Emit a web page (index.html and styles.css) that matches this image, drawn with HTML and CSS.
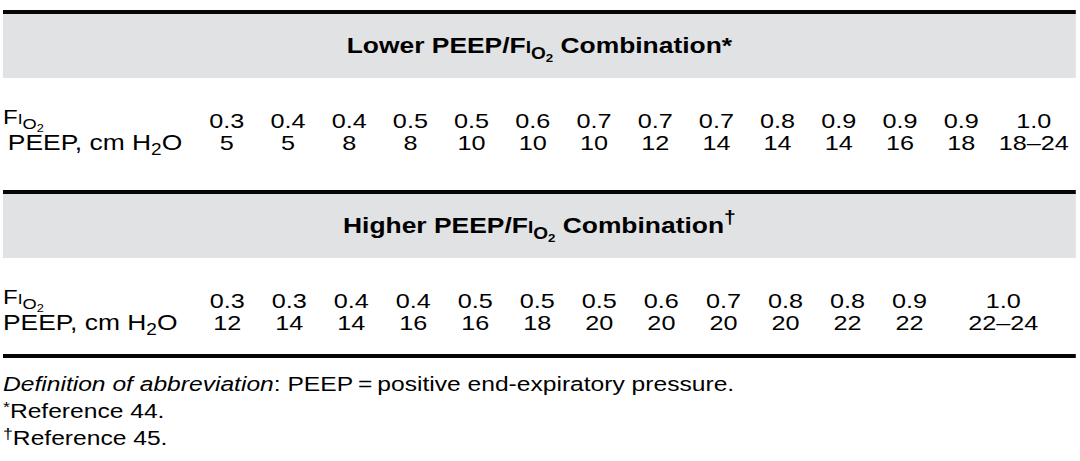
FILE: index.html
```html
<!DOCTYPE html>
<html lang="en">
<head>
<meta charset="utf-8">
<title>PEEP/FIO2 Combinations</title>
<link rel="stylesheet" href="styles.css">
</head>
<body>
<div class="page">
  <section class="tbl t1">
    <div class="rule"></div>
    <div class="band"><span class="title">Lower PEEP/F<span class="sc">I</span><span class="o">O<span class="two">2</span></span> Combination*</span></div>
    <div class="data">
      <span class="lab fio">F<span class="sc">I</span><span class="o">O<span class="two">2</span></span></span>
      <span>0.3</span><span>0.4</span><span>0.4</span><span>0.5</span><span>0.5</span><span>0.6</span><span>0.7</span><span>0.7</span><span>0.7</span><span>0.8</span><span>0.9</span><span>0.9</span><span>0.9</span><span>1.0</span>
      <span class="lab peep indent">PEEP, cm H<span class="h2">2</span>O</span>
      <span>5</span><span>5</span><span>8</span><span>8</span><span>10</span><span>10</span><span>10</span><span>12</span><span>14</span><span>14</span><span>14</span><span>16</span><span>18</span><span>18–24</span>
    </div>
  </section>
  <section class="tbl t2">
    <div class="rule"></div>
    <div class="band"><span class="title">Higher PEEP/F<span class="sc">I</span><span class="o">O<span class="two">2</span></span> Combination<span class="dag">†</span></span></div>
    <div class="data">
      <span class="lab fio">F<span class="sc">I</span><span class="o">O<span class="two">2</span></span></span>
      <span>0.3</span><span>0.3</span><span>0.4</span><span>0.4</span><span>0.5</span><span>0.5</span><span>0.5</span><span>0.6</span><span>0.7</span><span>0.8</span><span>0.8</span><span>0.9</span><span class="last">1.0</span>
      <span class="lab peep">PEEP, cm H<span class="h2">2</span>O</span>
      <span>12</span><span>14</span><span>14</span><span>16</span><span>16</span><span>18</span><span>20</span><span>20</span><span>20</span><span>20</span><span>22</span><span>22</span><span class="last">22–24</span>
    </div>
  </section>
  <div class="rule"></div>
  <div class="notes">
    <p><i>Definition of abbreviation</i>: PEEP&#8201;=&#8201;positive end-expiratory pressure.</p>
    <p><span class="fn">*</span>Reference 44.</p>
    <p><span class="fn">†</span>Reference 45.</p>
  </div>
</div>
</body>
</html>
```

FILE: styles.css
```css
html, body {
  margin: 0;
  padding: 0;
  background: #ffffff;
}

body {
  font-family: "Liberation Sans", Arial, Helvetica, sans-serif;
  color: #000000;
}

.page {
  width: 894px;
  margin-left: 3px;
  padding-top: 10px;
  transform: scaleX(1.2);
  transform-origin: 0 0;
}

.rule {
  height: 4px;
  background: #050505;
}

.band {
  height: 64px;
  background: #e1e2e4;
  display: flex;
  align-items: center;
  justify-content: center;
  font-weight: bold;
  font-size: 22px;
  line-height: 24px;
}

.title {
  white-space: nowrap;
}

.data {
  display: grid;
  font-size: 21px;
  line-height: 22px;
  padding: 32px 0 36px;
}

.t1 .data {
  grid-template-columns: 161px repeat(13, 51px) 1fr;
}

.t2 .data {
  grid-template-columns: 161px repeat(12, 51.7px) 1fr;
  padding-bottom: 20px;
}

.data > span {
  text-align: center;
  white-space: nowrap;
}

.data > .lab {
  text-align: left;
  font-size: 22px;
}

.t2 .data > .last {
  padding-right: 8px;
}

.data > .fio {
  font-size: 20px;
  margin-top: -4px;
}

.indent {
  padding-left: 4px;
}

.sc {
  font-size: 0.72em;
  line-height: 0;
}

.o {
  font-size: 0.76em;
  line-height: 0;
  vertical-align: -0.36em;
}

.two {
  font-size: 0.7em;
  line-height: 0;
  vertical-align: -0.3em;
}

.band .o {
  font-size: 0.72em;
  vertical-align: -0.42em;
}

.h2 {
  font-size: 0.72em;
  line-height: 0;
  vertical-align: -0.32em;
}

.dag {
  font-size: 0.8em;
  line-height: 0;
  vertical-align: 0.55em;
}

.notes {
  font-size: 20.5px;
  line-height: 27px;
  padding-top: 12px;
}

.notes p {
  margin: 0;
}

.fn {
  font-size: 0.72em;
  line-height: 0;
  vertical-align: 0.42em;
}
```
